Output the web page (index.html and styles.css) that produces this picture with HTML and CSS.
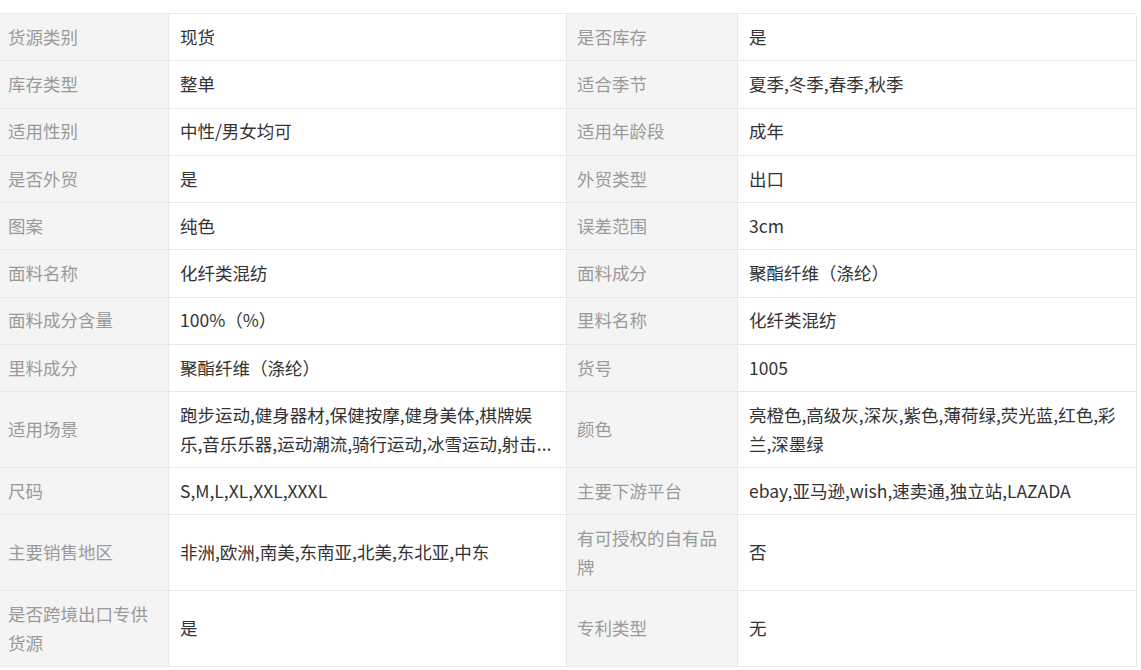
FILE: index.html
```html
<!DOCTYPE html>
<html lang="zh-CN">
<head>
<meta charset="utf-8">
<title>商品属性</title>
<link rel="stylesheet" href="styles.css">
</head>
<body>
<div class="attr-table">
  <div class="cell label">货源类别</div><div class="cell value">现货</div>
  <div class="cell label">是否库存</div><div class="cell value">是</div>

  <div class="cell label">库存类型</div><div class="cell value">整单</div>
  <div class="cell label">适合季节</div><div class="cell value">夏季,冬季,春季,秋季</div>

  <div class="cell label">适用性别</div><div class="cell value">中性/男女均可</div>
  <div class="cell label">适用年龄段</div><div class="cell value">成年</div>

  <div class="cell label">是否外贸</div><div class="cell value">是</div>
  <div class="cell label">外贸类型</div><div class="cell value">出口</div>

  <div class="cell label">图案</div><div class="cell value">纯色</div>
  <div class="cell label">误差范围</div><div class="cell value">3cm</div>

  <div class="cell label">面料名称</div><div class="cell value">化纤类混纺</div>
  <div class="cell label">面料成分</div><div class="cell value">聚酯纤维（涤纶）</div>

  <div class="cell label">面料成分含量</div><div class="cell value">100%（%）</div>
  <div class="cell label">里料名称</div><div class="cell value">化纤类混纺</div>

  <div class="cell label">里料成分</div><div class="cell value">聚酯纤维（涤纶）</div>
  <div class="cell label">货号</div><div class="cell value">1005</div>

  <div class="cell label">适用场景</div><div class="cell value"><span class="clamp">跑步运动,健身器材,保健按摩,健身美体,棋牌娱<br>乐,音乐乐器,运动潮流,骑行运动,冰雪运动,射击...</span></div>
  <div class="cell label">颜色</div><div class="cell value">亮橙色,高级灰,深灰,紫色,薄荷绿,荧光蓝,红色,彩兰,深墨绿</div>

  <div class="cell label">尺码</div><div class="cell value">S,M,L,XL,XXL,XXXL</div>
  <div class="cell label">主要下游平台</div><div class="cell value">ebay,亚马逊,wish,速卖通,独立站,LAZADA</div>

  <div class="cell label">主要销售地区</div><div class="cell value">非洲,欧洲,南美,东南亚,北美,东北亚,中东</div>
  <div class="cell label">有可授权的自有品牌</div><div class="cell value">否</div>

  <div class="cell label">是否跨境出口专供货源</div><div class="cell value">是</div>
  <div class="cell label">专利类型</div><div class="cell value">无</div>
</div>
</body>
</html>
```
FILE: styles.css
```css
html, body {
  margin: 0;
  padding: 0;
  background: #ffffff;
}

body {
  font-family: "Noto Sans CJK SC", "Noto Sans", sans-serif;
  font-size: 17.5px;
  line-height: 28.75px;
  color: #333333;
}

.attr-table {
  display: grid;
  grid-template-columns: 171px 398px 171px 399px;
  margin: 13px 0 0 -3px;
  border-top: 1px solid #e8e8e8;
  border-left: 1px solid #e8e8e8;
  border-top-right-radius: 4px;
  overflow: hidden;
  width: max-content;
}

.cell {
  box-sizing: border-box;
  display: flex;
  align-items: center;
  padding: 8.75px 10px;
  border-right: 1px solid #e8e8e8;
  border-bottom: 1px solid #e8e8e8;
  min-width: 0;
}

.label {
  background: #f4f4f4;
  color: #9a9a9a;
}

.value {
  background: #ffffff;
  color: #333333;
  padding-left: 11px;
}

.clamp {
  display: -webkit-box;
  -webkit-box-orient: vertical;
  -webkit-line-clamp: 2;
  overflow: hidden;
  margin-right: -2px;
}
```
